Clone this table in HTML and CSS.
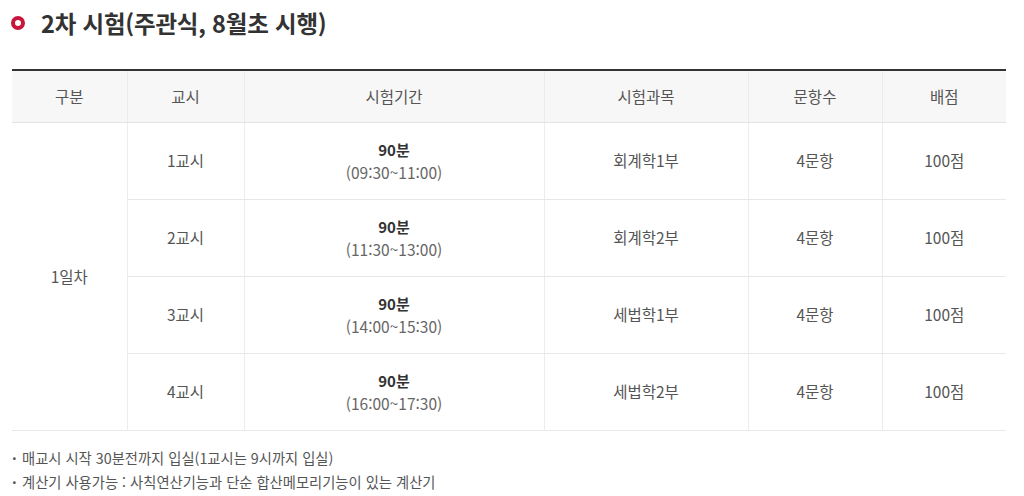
FILE: index.html
```html
<!DOCTYPE html>
<html lang="ko">
<head>
<meta charset="utf-8">
<link rel="stylesheet" href="styles.css">
</head>
<body>
<div class="page">
  <h2 class="title"><span class="dot"></span>2차 시험(주관식, 8월초 시행)</h2>
  <table class="exam">
    <colgroup>
      <col class="c1"><col class="c2"><col class="c3"><col class="c4"><col class="c5"><col class="c6">
    </colgroup>
    <thead>
      <tr><th>구분</th><th>교시</th><th>시험기간</th><th>시험과목</th><th>문항수</th><th>배점</th></tr>
    </thead>
    <tbody>
      <tr>
        <td rowspan="4" class="day">1일차</td>
        <td>1교시</td>
        <td><strong>90분</strong><span class="time">(09:30~11:00)</span></td>
        <td>회계학1부</td><td>4문항</td><td>100점</td>
      </tr>
      <tr>
        <td>2교시</td>
        <td><strong>90분</strong><span class="time">(11:30~13:00)</span></td>
        <td>회계학2부</td><td>4문항</td><td>100점</td>
      </tr>
      <tr>
        <td>3교시</td>
        <td><strong>90분</strong><span class="time">(14:00~15:30)</span></td>
        <td>세법학1부</td><td>4문항</td><td>100점</td>
      </tr>
      <tr>
        <td>4교시</td>
        <td><strong>90분</strong><span class="time">(16:00~17:30)</span></td>
        <td>세법학2부</td><td>4문항</td><td>100점</td>
      </tr>
    </tbody>
  </table>
  <ul class="notes">
    <li>매교시 시작 30분전까지 입실(1교시는 9시까지 입실)</li>
    <li>계산기 사용가능 : 사칙연산기능과 단순 합산메모리기능이 있는 계산기</li>
  </ul>
</div>
</body>
</html>
```

FILE: styles.css
```css
* { box-sizing: border-box; }
html, body { margin: 0; padding: 0; background: #fff; }
body {
  font-family: "Noto Sans CJK KR", "Noto Sans", sans-serif;
  color: #555;
}
.page {
  width: 1024px;
  padding: 0 18px 0 12px;
}
.title {
  display: flex;
  align-items: center;
  margin: 0;
  height: 44px;
  padding-top: 1px;
  font-size: 23.5px;
  font-weight: 700;
  color: #333;
  letter-spacing: -0.2px;
}
.dot {
  width: 14px;
  height: 14px;
  border-radius: 50%;
  border: 4.5px solid #c8153c;
  background: #fff;
  margin: 0 16px 0 -1px;
  flex: none;
}
.exam {
  width: 994px;
  margin-top: 25px;
  border-collapse: collapse;
  border-top: 2px solid #333;
  table-layout: fixed;
  font-size: 15.5px;
}
.c1 { width: 115px; }
.c2 { width: 117px; }
.c3 { width: 300px; }
.c4 { width: 204px; }
.c5 { width: 134px; }
.c6 { width: 124px; }
.exam th {
  height: 52px;
  background: #f7f7f7;
  font-weight: 400;
  color: #555;
  border-bottom: 1px solid #e3e3e3;
  border-left: 1px solid #ececec;
  padding: 0;
}
.exam td {
  height: 77px;
  text-align: center;
  border-bottom: 1px solid #e8e8e8;
  border-left: 1px solid #ececec;
  padding: 0;
  line-height: 23px;
}
.exam th:first-child, .exam td.day { border-left: none; }
.exam td strong {
  display: block;
  font-weight: 700;
  color: #333;
  font-size: 15px;
}
.exam td .time {
  display: block;
  color: #666;
  font-size: 15.5px;
}
.notes {
  list-style: none;
  margin: 15px 0 0;
  padding: 0;
  font-size: 14.3px;
  color: #555;
  line-height: 24px;
}
.notes li {
  position: relative;
  padding-left: 10px;
}
.notes li::before {
  content: "·";
  position: absolute;
  left: 0;
  top: 0;
  font-weight: 700;
}
```
